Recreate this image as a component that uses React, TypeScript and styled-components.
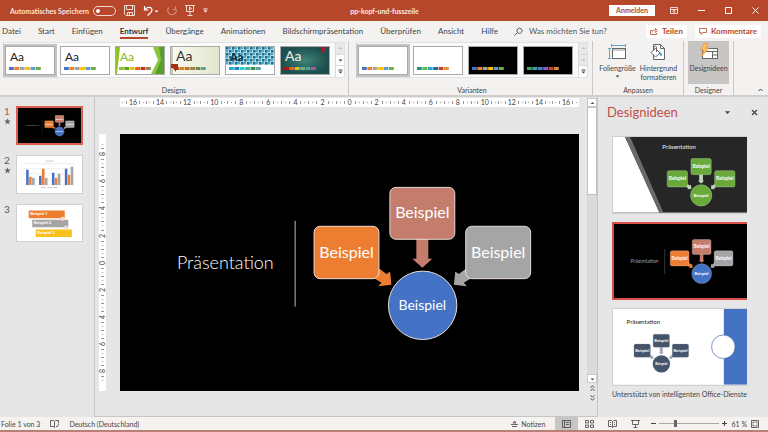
import React from "react";
import styled, { createGlobalStyle, css } from "styled-components";

const brand = "#b7472a";
const ui = `Lato, "Open Sans", sans-serif`;
const deck = `Lato, "Open Sans", sans-serif`;
const office = ["#4472c4", "#ed7d31", "#a5a5a5", "#ffc000", "#5b9bd5", "#70ad47"];

const Global = createGlobalStyle`
  *, *::before, *::after { box-sizing: border-box; }
  html, body, #root { margin: 0; min-height: 100vh; }
  body { font: 8px/12px ${ui}; color: #444; background: #e6e6e6; }
  button { font: inherit; color: inherit; background: none; border: 0; padding: 0; margin: 0; }
  a { color: inherit; text-decoration: none; }
  svg { display: block; flex: none; }
  h1, h2, p, ol, ul { margin: 0; padding: 0; font: inherit; list-style: none; }
`;

const Window = styled.div`
  display: flex;
  flex-direction: column;
  min-height: 100vh;
`;

/* Title bar */
const TitleBar = styled.header`
  display: grid;
  grid-template-columns: 1fr auto 1fr;
  align-items: center;
  height: 21px;
  padding: 0 9px 0 10px;
  color: #fff;
  background: ${brand};
`;
const QuickAccess = styled.div`
  display: flex;
  align-items: center;
  gap: 8px;
`;
const AutoSave = styled.label`
  display: flex;
  align-items: center;
  gap: 4px;
  white-space: nowrap;
  font-size: 7px;
  font-weight: 700;
  color: #f8e4dd;
`;
const Toggle = styled.input`
  appearance: none;
  display: flex;
  align-items: center;
  width: 23px;
  height: 10px;
  margin: 0;
  padding: 0 2px;
  border: 1px solid #f3d9d1;
  border-radius: 5px;
  &::before {
    content: "";
    width: 4px;
    height: 4px;
    border-radius: 50%;
    background: #fff;
  }
`;
const IconButton = styled.button<{ $dim?: boolean }>`
  display: flex;
  align-items: center;
  justify-content: center;
  opacity: ${(p) => (p.$dim ? 0.35 : 1)};
`;
const FileName = styled.h1`
  font-size: 7px;
  font-weight: 700;
  color: #fbeae5;
`;
const WindowControls = styled.div`
  display: flex;
  align-items: center;
  justify-content: flex-end;
  gap: 20px;
`;
const SignIn = styled.button`
  width: 46px;
  height: 11px;
  margin-right: -5px;
  font-size: 7px;
  line-height: 11px;
  font-weight: 700;
  color: ${brand};
  background: #fff;
`;

/* Ribbon tabs */
const TabBar = styled.nav`
  display: flex;
  align-items: center;
  height: 20px;
  padding: 0 7px 0 2px;
  background: #f3f2f1;
`;
const Tabs = styled.ul`
  display: flex;
  gap: 17px;
`;
const Tab = styled.a<{ $active?: boolean }>`
  display: block;
  height: 16px;
  line-height: 16px;
  white-space: nowrap;
  ${(p) =>
    p.$active &&
    css`
      font-weight: 700;
      border-bottom: 2px solid ${brand};
      color: #333;
    `}
`;
const Search = styled.label`
  display: flex;
  align-items: center;
  gap: 6px;
  flex: 1;
  margin-left: 16px;
`;
const SearchInput = styled.input`
  width: 100px;
  padding: 0;
  border: 0;
  outline: 0;
  font: inherit;
  color: #444;
  background: none;
  &::placeholder { color: #555; opacity: 1; }
`;
const ShareActions = styled.div`
  display: flex;
  gap: 8px;
`;
const ShareButton = styled.button`
  display: flex;
  align-items: center;
  gap: 4px;
  height: 13px;
  padding: 0 4px;
  font-weight: 700;
  color: ${brand};
  background: #fff;
`;

/* Ribbon */
const Ribbon = styled.section`
  display: flex;
  height: 56px;
  background: #f3f2f1;
  border-bottom: 2px solid #d0cfce;
`;
const Group = styled.div<{ $before?: number; $after?: number }>`
  display: flex;
  flex-direction: column;
  justify-content: space-between;
  align-items: center;
  padding: 0 ${(p) => p.$after ?? 4}px 0 ${(p) => p.$before ?? 4}px;
  border-right: 1px solid #cbc9c7;
`;
const GroupLabel = styled.h2`
  font-size: 7px;
  line-height: 9px;
  color: #444;
`;
const GroupBody = styled.div`
  display: flex;
`;
const Gallery = styled.div`
  display: flex;
  align-items: center;
  gap: 5px;
  height: 36px;
  margin-top: 1px;
  padding-left: 1px;
  background: #fafafa;
  border: 1px solid #e3e1df;
`;
const Swatch = styled.button<{ $selected?: boolean }>`
  border: 1px solid #a9a9a9;
  ${(p) => p.$selected && css`outline: 2px solid #c4c4c4;`}
`;
const Spinner = styled.div`
  display: flex;
  flex-direction: column;
  align-self: stretch;
  width: 9px;
  border-left: 1px solid #dcdad8;
`;
const SpinnerButton = styled.button<{ $off?: boolean }>`
  display: flex;
  flex: 1;
  align-items: center;
  justify-content: center;
  color: ${(p) => (p.$off ? "#bbb" : "#444")};
  background: ${(p) => (p.$off ? "#e9e8e7" : "#fff")};
  & + & { border-top: 1px solid #dcdad8; }
`;
const Command = styled.button<{ $active?: boolean }>`
  display: flex;
  flex-direction: column;
  align-items: center;
  width: 41px;
  height: 43px;
  padding-top: 2px;
  gap: 3px;
  font-size: 7px;
  line-height: 9px;
  background: ${(p) => (p.$active ? "#c8c6c4" : "none")};
`;
const CommandText = styled.span`
  display: flex;
  flex-direction: column;
  align-items: center;
`;
const RibbonEnd = styled.div`
  display: flex;
  flex: 1;
  align-items: flex-end;
  justify-content: flex-end;
  padding: 0 5px 2px;
`;

/* Workspace */
const Workspace = styled.main`
  display: grid;
  grid-template-columns: 94px 1fr 170px;
  flex: 1;
  background: #e6e6e6;
`;
const SlideList = styled.ol`
  display: flex;
  flex-direction: column;
  gap: 10px;
  padding: 9px 0 0 4px;
`;
const SlideItem = styled.li`
  display: grid;
  grid-template-columns: 11px 67px;
  align-items: start;
  gap: 1px;
  min-height: 38px;
`;
const SlideNumber = styled.div<{ $active?: boolean }>`
  display: flex;
  flex-direction: column;
  gap: 1px;
  font-size: 10px;
  line-height: 11px;
  color: ${(p) => (p.$active ? "#c8503a" : "#555")};
`;
const Thumb = styled.button<{ $active?: boolean }>`
  width: 67px;
  padding: 0;
  border: ${(p) => (p.$active ? "2px solid #d9604c" : "1px solid #d0d0d0")};
  background: #fff;
`;
const Editor = styled.section`
  display: grid;
  grid-template-columns: 7px minmax(0, 1fr) 10px;
  grid-template-rows: 9px auto;
  align-content: start;
  row-gap: 27px;
  padding: 1px 0 0 4px;
  border-left: 1px solid #c6c6c6;
  border-right: 1px solid #c6c6c6;
  border-bottom: 1px solid #c6c6c6;
`;
const Ruler = styled.div<{ $vertical?: boolean }>`
  display: flex;
  flex-direction: ${(p) => (p.$vertical ? "column" : "row")};
  align-items: center;
  grid-column: ${(p) => (p.$vertical ? 1 : 2)};
  grid-row: ${(p) => (p.$vertical ? 2 : 1)};
  margin: ${(p) => (p.$vertical ? "0" : "0 8px 0 14px")};
  padding: ${(p) => (p.$vertical ? "7px 0" : "0")};
  font-size: 7px;
  line-height: 9px;
  color: #444;
  background: #fff;
`;
const RulerCell = styled.div<{ $vertical?: boolean }>`
  display: flex;
  flex: 1;
  flex-direction: ${(p) => (p.$vertical ? "column" : "row")};
  align-items: center;
  justify-content: space-evenly;
`;
const RulerNumber = styled.span<{ $vertical?: boolean }>`
  ${(p) =>
    p.$vertical &&
    css`
      writing-mode: vertical-rl;
      transform: rotate(180deg);
      line-height: 7px;
    `}
`;
const Tick = styled.i<{ $vertical?: boolean; $long?: boolean }>`
  background: #999;
  width: ${(p) => (p.$vertical && p.$long ? 3 : 1)}px;
  height: ${(p) => (!p.$vertical && p.$long ? 3 : 1)}px;
`;
const Stage = styled.div`
  grid-column: 2;
  grid-row: 2;
  margin: 0 8px 0 14px;
`;
const ScrollBar = styled.div`
  display: flex;
  flex-direction: column;
  grid-column: 3;
  grid-row: 1 / 3;
  margin-bottom: -12px;
  color: #555;
`;
const ScrollButton = styled.button<{ $plain?: boolean }>`
  display: flex;
  align-items: center;
  justify-content: center;
  height: ${(p) => (p.$plain ? 10 : 9)}px;
  background: ${(p) => (p.$plain ? "none" : "#fff")};
  border: ${(p) => (p.$plain ? "0" : "1px solid #c8c8c8")};
`;
const ScrollTrack = styled.div`
  flex: 1;
  background: #dadada;
`;
const ScrollThumb = styled.div`
  height: 33%;
  background: #fff;
  border: 1px solid #c0c0c0;
`;

/* Designer pane */
const Pane = styled.aside`
  display: flex;
  flex-direction: column;
  gap: 14px;
  min-width: 0;
  padding: 5px 10px 0 9px;
`;
const PaneHeader = styled.div`
  display: flex;
  align-items: center;
  gap: 20px;
  height: 20px;
`;
const PaneTitle = styled.h2`
  flex: 1;
  font-size: 13px;
  line-height: 20px;
  color: #c0504a;
`;
const Ideas = styled.div`
  display: flex;
  flex-direction: column;
  gap: 8px;
  padding: 0 11px 0 5px;
`;
const Idea = styled.button<{ $active?: boolean }>`
  padding: 0;
  border: ${(p) => (p.$active ? "2px solid #d9504c" : "1px solid #d0d0d0")};
  border-right: 0;
`;
const Credit = styled.p`
  margin-top: -6px;
  font-size: 7px;
  white-space: nowrap;
`;

/* Status bar */
const StatusBar = styled.footer`
  display: flex;
  align-items: center;
  justify-content: space-between;
  height: 15px;
  padding: 0 9px 0 1px;
  font-size: 7px;
  line-height: 12px;
  background: #f5f2f0;
  border-bottom: 2px solid #b98078;
`;
const StatusGroup = styled.div<{ $gap: number }>`
  display: flex;
  align-items: center;
  align-self: stretch;
  gap: ${(p) => p.$gap}px;
`;
const NotesButton = styled.button`
  display: flex;
  align-items: center;
  gap: 3px;
  margin-right: 6px;
`;
const ViewButton = styled.button<{ $active?: boolean }>`
  display: flex;
  align-items: center;
  justify-content: center;
  align-self: stretch;
  width: 23px;
  background: ${(p) => (p.$active ? "#c8c6c4" : "none")};
`;
const Views = styled.div`
  display: flex;
  align-self: stretch;
`;
const Zoom = styled.div`
  display: flex;
  align-items: center;
  gap: 3px;
`;
const ZoomRange = styled.input`
  appearance: none;
  width: 60px;
  height: 9px;
  margin: 0;
  background: linear-gradient(#aaa, #aaa) center / 100% 1px no-repeat;
  &::-webkit-slider-thumb {
    appearance: none;
    width: 3px;
    height: 7px;
    background: #666;
  }
`;

/* Icons */
const Caret = ({ up, bar, large }: { up?: boolean; bar?: boolean; large?: boolean }) => (
  <svg width={large ? 7 : 5} height={large ? 8 : 6} viewBox="0 0 5 6">
    {bar && <path d="M.5 1h4" stroke="currentColor" />}
    <path d={up ? "M.5 4h4L2.5 2z" : "M.5 2.5h4L2.5 4.5z"} fill="currentColor" />
  </svg>
);
const Line = ({ w, h, d, sw = 1 }: { w: number; h: number; d: string; sw?: number }) => (
  <svg width={w} height={h} viewBox={`0 0 ${w} ${h}`} fill="none" stroke="currentColor" strokeWidth={sw}>
    <path d={d} />
  </svg>
);
const Star = () => (
  <svg width="7" height="7" viewBox="0 0 7 7">
    <path d="M3.5.2l.9 2.2 2.4.1-1.9 1.5.7 2.4-2.1-1.3-2.1 1.3.7-2.4L.2 2.500l2.400-.1z" fill="#666" />
  </svg>
);
const SlideSizeIcon = () => (
  <svg width="20" height="18" viewBox="0 0 20 18" fill="none">
    <path d="M3 2.500h15M3.500 1v3M17.500 1v3M1.500 5v11M0 5.500h3M0 15.500h3" stroke="#5aa6cc" />
    <rect x="4.500" y="5.500" width="13" height="10" fill="#fff" stroke="#666" />
    <path d="M5 7h12" stroke="#999" />
  </svg>
);
const BackgroundIcon = () => (
  <svg width="20" height="18" viewBox="0 0 20 18" fill="none" stroke="#666">
    <path d="M4.500 1.500h7l4 4v11h-11z" fill="#fff" />
    <path d="M11.500 1.500v4h4" />
    <path d="M2 9.500l4.500-4 4.500 4.500-4.500 4zM5 7V4.500c0-2 2.500-2 2.500 0V9" fill="#fff" />
    <path d="M11 9.500c1.800 1 2 2.500 1 3.500-1-1-1.500-2-1-3.500" fill="#4a9cc8" stroke="#4a9cc8" strokeWidth=".6" />
  </svg>
);
const IdeasIcon = () => (
  <svg width="20" height="18" viewBox="0 0 20 18" fill="none">
    <rect x="3.500" y="5.500" width="15" height="10" fill="#fff" stroke="#666" />
    <path d="M4 8.500h14M13.500 8.500v7M13.500 12h5" stroke="#666" />
    <path d="M5 .5h4L7 5h3l-7 8 1.500-6H1.500z" fill="#f8c060" stroke="#e8923a" strokeWidth=".7" />
  </svg>
);

/* Slide artwork */
interface Palette {
  left: string;
  top: string;
  right: string;
  hub: string;
  edge: string;
  arrow?: string;
}
const vivid: Palette = { left: "#ed7d31", top: "#c47c6c", right: "#a5a5a5", hub: "#4472c4", edge: "#e9dcd6" };
const green: Palette = { left: "#6aaa3a", top: "#6aaa3a", right: "#6aaa3a", hub: "#6aaa3a", edge: "#d5e8c8", arrow: "#c3d6b8" };
const slate: Palette = { left: "#44546a", top: "#44546a", right: "#44546a", hub: "#44546a", edge: "#8a94a4", arrow: "#a4abb5" };

const Diagram = ({ palette: p, bold }: { palette: Palette; bold?: boolean }) => {
  const weight = bold ? 700 : 400;
  return (
    <g fontFamily={deck} fontWeight={weight} textAnchor="middle" stroke="none">
      <path d="M297 105h12v20h4l-10 9-10-9h4z" fill={p.arrow ?? p.top} />
      <path d="M260 135l7 5.300 3.700-2.300 1.300 13-13 1.500 3-3.500-8-5z" fill={p.arrow ?? p.left} />
      <path d="M346.600 135l-7 5.300-3.600-2.300-1.400 13 13 1.500-3-3.500 8-5z" fill={p.arrow ?? p.right} />
      <g stroke={p.edge}>
        <rect x="194.500" y="92.500" width="65" height="52.500" rx="6" fill={p.left} />
        <rect x="270.500" y="53.500" width="65" height="52" rx="6" fill={p.top} />
        <rect x="346.500" y="92.500" width="65" height="52.500" rx="6" fill={p.right} />
        <circle cx="303.300" cy="171.700" r="34.300" fill={p.hub} />
      </g>
      <g fill="#fff">
        <text x="227" y="124" fontSize="16">Beispiel</text>
        <text x="303" y="84" fontSize="16">Beispiel</text>
        <text x="379" y="124" fontSize="16">Beispiel</text>
        <text x="303" y="176" fontSize="14">Beispiel</text>
      </g>
    </g>
  );
};
const TitleSlide = ({ bold }: { bold?: boolean }) => (
  <svg width="100%" viewBox="0 0 460 258">
    <rect width="460" height="258" fill="#000" />
    <text x="57" y="135" fontFamily={deck} fontSize="18" fontWeight="300" fill="#fff">Präsentation</text>
    <path d="M175.500 87v86" stroke="#bbb" />
    <Diagram palette={vivid} bold={bold} />
  </svg>
);
const bars = [[15, 8, 7], [9, 16, 7], [12, 7, 11], [16, 10, 18]];
const ChartSlide = () => (
  <svg width="100%" viewBox="0 0 64 36">
    <path d="M6 7.500h50M6 12.500h50M6 17.500h50M6 23.500h50M6 28.500h50" stroke="#ddd" strokeWidth=".5" />
    <path d="M28 5h8M24 31h4M30 31h4M36 31h4" stroke="#bbb" strokeWidth=".8" />
    {bars.map((set, g) =>
      set.map((h, i) => (
        <rect key={`${g}${i}`} x={9 + g * 12.700 + i * 2.900} y={28.500 - h} width="2.500" height={h} fill={office[i]} />
      ))
    )}
  </svg>
);
const steps = [["#ed7d31", 11.5, 5.5], ["#a5a5a5", 15, 14.5], ["#f9c11c", 18.5, 24]] as const;
const StepsSlide = () => (
  <svg width="100%" viewBox="0 0 64 36">
    {steps.map(([fill, x, y], i) => (
      <g key={fill}>
        <rect x={x} y={y} width="35.500" height="7.500" rx=".6" fill={fill} />
        <text x={x + 1.500} y={y + 4.500} fontFamily={deck} fontWeight="700" fontSize="4" fill="#fff">{`Beispiel ${i + 1}`}</text>
      </g>
    ))}
    <path d="M43.500 11.500h3v2h1l-2.500 2.500-2.500-2.500h1zM46.500 20.500h3v2h1l-2.500 2.500-2.500-2.500h1z" fill="#f3dcd2" />
  </svg>
);
const DarkIdea = () => (
  <svg width="100%" viewBox="0 0 133 75">
    <rect width="133" height="75" fill="#262626" />
    <path d="M0 0h12l34 75H0z" fill="#fff" />
    <path d="M12 0h5l33 75h-4z" fill="#6a6a6a" />
    <text x="49" y="12" fontFamily={deck} fontSize="6" fill="#eee">Präsentation</text>
    <g transform="translate(-6.500 4.700) scale(.31)"><Diagram palette={green} bold /></g>
  </svg>
);
const LightIdea = () => (
  <svg width="100%" viewBox="0 0 133 75">
    <rect width="133" height="75" fill="#fff" />
    <rect x="110" width="23" height="75" fill="#4472c4" />
    <circle cx="109.500" cy="37.500" r="11.700" fill="#fff" stroke="#4a69a8" strokeWidth=".7" />
    <text x="13.500" y="15" fontFamily={deck} fontSize="6" fill="#222">Präsentation</text>
    <g transform="translate(-27.800 11.600) scale(.25)"><Diagram palette={slate} bold /></g>
  </svg>
);

/* Theme gallery artwork */
const Chips = ({ colors }: { colors: string[] }) => (
  <g>{colors.map((c, i) => <rect key={i} x={3 + i * 5.400} y="20" width="4.800" height="3" fill={c} />)}</g>
);
const Art = ({ colors, aa, bg = "#fff", children }: {
  colors: string[]; aa?: string; bg?: string; children?: React.ReactNode;
}) => (
  <svg width="48" height="27" viewBox="0 0 48 27">
    <rect width="48" height="27" fill={bg} />
    {children}
    {aa && <text x="4" y="14" fontFamily={deck} fontSize="12" fill={aa}>Aa</text>}
    <Chips colors={colors} />
  </svg>
);
const themes: { name: string; art: React.ReactNode }[] = [
  { name: "Aktuelles Design", art: <Art colors={office} aa="#222" /> },
  { name: "Office", art: <Art colors={office} aa="#222" /> },
  {
    name: "Facette",
    art: (
      <Art colors={["#90c226", "#54a021", "#e6b91e", "#e76618", "#c42f1a", "#918655"]} aa="#7db928">
        <path d="M0 0h4L1 27H0z" fill="#90c226" />
        <path d="M37 0h11v27H35l7-14z" fill="#8cc63f" />
        <path d="M43 0h5v27h-9l6-14z" fill="#5b9e2d" />
      </Art>
    ),
  },
  {
    name: "Fetzen",
    art: (
      <Art colors={["#a53010", "#de7e18", "#c0722a", "#9f8351", "#728653", "#5aa594"]} bg="url(#cream)">
        <defs>
          <linearGradient id="cream"><stop offset="0" stopColor="#fafaf2" /><stop offset="1" stopColor="#e0e6cb" /></linearGradient>
        </defs>
        <path d="M0 0h2v27H0z" fill="#c9c9bd" />
        <path d="M0 17h7v3H5v5l-3-4H0z" fill="#a53010" />
        <text x="5" y="14" fontFamily={deck} fontSize="14" fill="#333">Aa</text>
      </Art>
    ),
  },
  {
    name: "Integral",
    art: (
      <Art colors={["#1cade4", "#2683c6", "#27ced7", "#42ba97", "#3e8853", "#62a39f"]}>
        <defs>
          <pattern id="weave" width="6" height="6" patternUnits="userSpaceOnUse">
            <rect width="6" height="6" fill="#b5dbe8" />
            <path d="M0 0h2.500v2.500H0zM3 3h2.500v2.500H3z" fill="#16708f" />
            <path d="M3 0h2v2H3zM0 3h2v2H0z" fill="#52a7c4" />
          </pattern>
        </defs>
        <rect width="48" height="18" fill="url(#weave)" />
        <text x="4" y="14" fontFamily={deck} fontWeight="700" fontSize="11" fill="#0b2e3c">Aa</text>
      </Art>
    ),
  },
  {
    name: "Ion",
    art: (
      <Art colors={["#b01513", "#ea6312", "#e6b729", "#6aac90", "#5f9c9d", "#9e5e9b"]} bg="url(#teal)">
        <defs>
          <radialGradient id="teal"><stop offset="0" stopColor="#3f8478" /><stop offset="1" stopColor="#1c4f4e" /></radialGradient>
        </defs>
        <path d="M41 0h4v6l-2-2-2 2z" fill="#b01533" />
        <text x="4" y="14" fontFamily={deck} fontSize="14" fill="#eee">Aa</text>
      </Art>
    ),
  },
];
const variants = [
  { name: "Variante 1", bg: "#fff", colors: office },
  { name: "Variante 2", bg: "#fff", colors: ["#1f8f7a", "#62bb46", "#2aa5d8", "#1c6f9c", "#b5482a", "#e8923a"] },
  { name: "Variante 3", bg: "#000", colors: office },
  { name: "Variante 4", bg: "#000", colors: ["#4aa564", "#3aa5a0", "#4a7fd0", "#8a5bc0", "#c8483e", "#d08a3a"] },
];

const SpinButtons = ({ second }: { second?: boolean }) => (
  <Spinner>
    <SpinnerButton $off aria-label="Nach oben"><Caret up /></SpinnerButton>
    <SpinnerButton $off={second} aria-label="Nach unten"><Caret /></SpinnerButton>
    <SpinnerButton aria-label="Weitere"><Caret bar /></SpinnerButton>
  </Spinner>
);

const RulerTrack = ({ values, vertical: v }: { values: number[]; vertical?: boolean }) => (
  <Ruler $vertical={v}>
    {values.map((n, i) => (
      <React.Fragment key={i}>
        {i > 0 && <Tick $vertical={v} $long />}
        <RulerCell $vertical={v}>
          <Tick $vertical={v} /><Tick $vertical={v} $long />
          <RulerNumber $vertical={v}>{n}</RulerNumber>
          <Tick $vertical={v} $long /><Tick $vertical={v} />
        </RulerCell>
      </React.Fragment>
    ))}
  </Ruler>
);

const tabs = ["Datei", "Start", "Einfügen", "Entwurf", "Übergänge", "Animationen", "Bildschirmpräsentation", "Überprüfen", "Ansicht", "Hilfe"];

export default function App() {
  return (
    <Window>
      <Global />
      <TitleBar>
        <QuickAccess>
          <AutoSave>
            Automatisches Speichern
            <Toggle type="checkbox" role="switch" />
          </AutoSave>
          <IconButton aria-label="Speichern"><Line w={11} h={11} d="M.5.5h10v10H2L.5 9zM2.500.5v4h6v-4M3.500 10.500v-3h5v3M5.500 8v2" sw={0.8} /></IconButton>
          <IconButton aria-label="Rückgängig">
            <Line w={11} h={11} d="M1.500 1v4h4M1.500 5c3-4 7.500-3 7.500 0 0 2-2 3.500-4.500 5.500" sw={1.2} />
            <Caret />
          </IconButton>
          <IconButton $dim aria-label="Wiederholen"><Line w={10} h={11} d="M8.500 1v3.500H5.500M2 2.500C-.5 5 1 9.500 5 9.500s5.500-4 3-6.500" sw={1.2} /></IconButton>
          <IconButton aria-label="Präsentation starten"><Line w={10} h={11} d="M0 .5h10M1.500.5v6h7v-6M5 6.500v3.500M2.500 10.500h5M4.500 2v3l2-1.500z" sw={0.8} /></IconButton>
          <IconButton aria-label="Symbolleiste anpassen"><Caret bar /></IconButton>
        </QuickAccess>
        <FileName>pp-kopf-und-fusszeile</FileName>
        <WindowControls>
          <SignIn>Anmelden</SignIn>
          <IconButton aria-label="Menüband-Optionen"><Line w={8} h={7} d="M.5.5h7v6h-7zM.5 2.500h7M4 6V3.500M2.500 4.500L4 3l1.500 1.500" sw={0.8} /></IconButton>
          <IconButton aria-label="Minimieren"><Line w={7} h={7} d="M0 3.500h7" /></IconButton>
          <IconButton aria-label="Maximieren"><Line w={7} h={7} d="M.5.5h6v6h-6z" /></IconButton>
          <IconButton aria-label="Schließen"><Line w={7} h={7} d="M.5.5l6 6M6.500.5l-6 6" /></IconButton>
        </WindowControls>
      </TitleBar>

      <TabBar>
        <Tabs>
          {tabs.map((t) => (
            <li key={t}><Tab href="#" $active={t === "Entwurf"}>{t}</Tab></li>
          ))}
        </Tabs>
        <Search>
          <Line w={9} h={9} d="M3.500 5.500a2.600 2.600 0 1 1 4 0 2.600 2.600 0 0 1-4 0L.5 8.500" sw={0.9} />
          <SearchInput aria-label="Suche" placeholder="Was möchten Sie tun?" />
        </Search>
        <ShareActions>
          <ShareButton><Line w={8} h={7} d="M2.500 2.500h-2v4h6V5M2.500 4.500c0-2 1.500-2.500 3-2.500V.5l2 2-2 2V3" sw={0.8} />Teilen</ShareButton>
          <ShareButton><Line w={8} h={7} d="M.5.5h7v4H3.500L2 6.500v-2H.5z" sw={0.8} />Kommentare</ShareButton>
        </ShareActions>
      </TabBar>

      <Ribbon>
        <Group $before={3} $after={3}>
          <Gallery>
            {themes.map((t, i) => (
              <Swatch key={t.name} $selected={i === 0} aria-label={t.name}>{t.art}</Swatch>
            ))}
            <SpinButtons />
          </Gallery>
          <GroupLabel>Designs</GroupLabel>
        </Group>
        <Group $before={7} $after={4}>
          <Gallery>
            {variants.map((t, i) => (
              <Swatch key={t.name} $selected={i === 0} aria-label={t.name}><Art colors={t.colors} bg={t.bg} /></Swatch>
            ))}
            <SpinButtons second />
          </Gallery>
          <GroupLabel>Varianten</GroupLabel>
        </Group>
        <Group>
          <GroupBody>
            <Command><SlideSizeIcon /><CommandText>Foliengröße<Caret /></CommandText></Command>
            <Command><BackgroundIcon /><CommandText><span>Hintergrund</span><span>formatieren</span></CommandText></Command>
          </GroupBody>
          <GroupLabel>Anpassen</GroupLabel>
        </Group>
        <Group>
          <Command $active><IdeasIcon /><CommandText>Designideen</CommandText></Command>
          <GroupLabel>Designer</GroupLabel>
        </Group>
        <RibbonEnd>
          <IconButton aria-label="Menüband reduzieren"><Line w={5} h={6} d="M.5 4l2-2 2 2" /></IconButton>
        </RibbonEnd>
      </Ribbon>

      <Workspace>
        <SlideList>
          <SlideItem>
            <SlideNumber $active>1<Star /></SlideNumber>
            <Thumb $active aria-label="Folie 1"><TitleSlide bold /></Thumb>
          </SlideItem>
          <SlideItem>
            <SlideNumber>2<Star /></SlideNumber>
            <Thumb aria-label="Folie 2"><ChartSlide /></Thumb>
          </SlideItem>
          <SlideItem>
            <SlideNumber>3</SlideNumber>
            <Thumb aria-label="Folie 3"><StepsSlide /></Thumb>
          </SlideItem>
        </SlideList>

        <Editor>
          <RulerTrack values={[16, 14, 12, 10, 8, 6, 4, 2, 0, 2, 4, 6, 8, 10, 12, 14, 16]} />
          <RulerTrack vertical values={[8, 6, 4, 2, 0, 2, 4, 6, 8]} />
          <Stage><TitleSlide /></Stage>
          <ScrollBar>
            <ScrollButton aria-label="Nach oben"><Caret up /></ScrollButton>
            <ScrollTrack><ScrollThumb /></ScrollTrack>
            <ScrollButton aria-label="Nach unten"><Caret /></ScrollButton>
            <ScrollButton $plain aria-label="Vorherige Folie"><Line w={5} h={6} d="M.5 2.500l2-1.500 2 1.500M.5 5.500l2-1.500 2 1.500" /></ScrollButton>
            <ScrollButton $plain aria-label="Nächste Folie"><Line w={5} h={6} d="M.5.5l2 1.500 2-1.500M.5 3.500l2 1.500 2-1.500" /></ScrollButton>
          </ScrollBar>
        </Editor>

        <Pane>
          <PaneHeader>
            <PaneTitle>Designideen</PaneTitle>
            <IconButton aria-label="Bereichsoptionen"><Caret large /></IconButton>
            <IconButton aria-label="Bereich schließen"><Line w={7} h={7} d="M1 1l5 5M6 1L1 6" sw={1.3} /></IconButton>
          </PaneHeader>
          <Ideas>
            <Idea aria-label="Idee 1"><DarkIdea /></Idea>
            <Idea $active aria-label="Idee 2"><TitleSlide bold /></Idea>
            <Idea aria-label="Idee 3"><LightIdea /></Idea>
            <Credit>Unterstützt von intelligenten Office-Dienste</Credit>
          </Ideas>
        </Pane>
      </Workspace>

      <StatusBar>
        <StatusGroup $gap={10}>
          <span>Folie 1 von 3</span>
          <Line w={9} h={8} d="M4.500 1.500v6M.5.5h3l1 1 1-1h3v3M.5.5v6h3l1 1M6 6l1 1 2-3" sw={0.8} />
          <span>Deutsch (Deutschland)</span>
        </StatusGroup>
        <StatusGroup $gap={4}>
          <NotesButton><Line w={7} h={7} d="M0 4.500h7M1 6.500h5M2 3L3.500 1 5 3z" sw={0.8} />Notizen</NotesButton>
          <Views>
            <ViewButton $active aria-label="Normal"><Line w={9} h={8} d="M.5.5h8v7h-8zM2.500.5v7M4 2.500h3M4 4.500h3" sw={0.8} /></ViewButton>
            <ViewButton aria-label="Foliensortierung"><Line w={9} h={8} d="M.5.5h3v2.500h-3zM5.500.5h3v2.500h-3zM.5 5h3v2.500h-3zM5.500 5h3v2.500h-3z" sw={0.8} /></ViewButton>
            <ViewButton aria-label="Leseansicht"><Line w={9} h={8} d="M4.500 1.500v6M.5.5h3l1 1 1-1h3v6h-3l-1 1-1-1h-3zM2 2.500h1M2 4.500h1M6 2.500h1M6 4.500h1" sw={0.8} /></ViewButton>
            <ViewButton aria-label="Bildschirmpräsentation"><Line w={9} h={8} d="M0 .5h9M1.500.5v4h6v-4M4.500 4.500v3M2.500 7.500h4" sw={0.8} /></ViewButton>
          </Views>
          <Zoom>
            <IconButton aria-label="Verkleinern"><Line w={5} h={5} d="M0 2.500h5" /></IconButton>
            <ZoomRange type="range" min="10" max="400" defaultValue="110" aria-label="Zoom" />
            <IconButton aria-label="Vergrößern"><Line w={5} h={5} d="M0 2.500h5M2.500 0v5" /></IconButton>
          </Zoom>
          <span>61 %</span>
          <IconButton aria-label="An Fenster anpassen"><Line w={8} h={8} d="M.5.5h7v7h-7zM2 3.500V2h1.500M4.500 2H6v1.500M6 4.500V6H4.500M3.500 6H2V4.500" sw={0.8} /></IconButton>
        </StatusGroup>
      </StatusBar>
    </Window>
  );
}
